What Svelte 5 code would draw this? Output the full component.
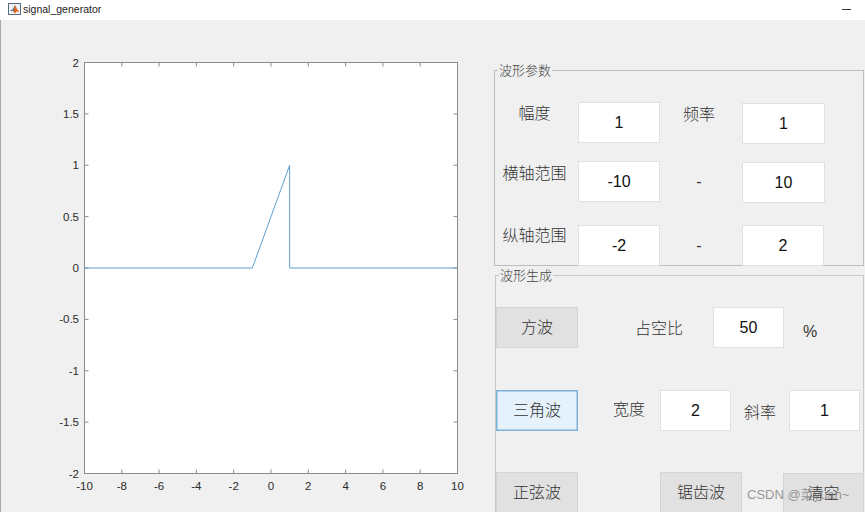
<script>
  const xs = [-10, -8, -6, -4, -2, 0, 2, 4, 6, 8, 10];
  const ys = [-2, -1.5, -1, -0.5, 0, 0.5, 1, 1.5, 2];
  const px = (v) => 0.5 + ((v + 10) / 20) * 373;
  const py = (v) => 0.5 + ((2 - v) / 4) * 411;
  const line = [[-10, 0], [-1, 0], [1, 1], [1, 0], [10, 0]].map(([a, b]) => `${px(a)},${py(b)}`).join(' ');
</script>

<div class="window">
  <header class="titlebar">
    <svg class="logo" viewBox="0 0 13 12" width="13" height="12" aria-hidden="true">
      <rect x="0.5" y="0.5" width="12" height="11" fill="#eef2f7" stroke="#5d6d80" />
      <path d="M2 8 L5 6.2 L7 2 L9 6 L11.5 9.5 L8.8 8.2 L7 10.5 L5 8 Z" fill="#e0631f" />
      <path d="M2 8 L5 6.2 L7 2 L6 6.5 L4.8 8 Z" fill="#2f78b5" />
    </svg>
    <span class="title">signal_generator</span>
    <span class="minimize"></span>
  </header>

  <main class="body">
    <section class="plot">
      <svg width="444" height="450" viewBox="-44 -8 444 450" aria-label="plot">
        <rect x="0.5" y="0.5" width="373" height="411" fill="#fff" />
        {#each xs as v}
          <path class="tick" d="M{px(v)} 0.5 v4 M{px(v)} 411.5 v-4" />
          <text class="xlabel" x={px(v)} y="428">{v}</text>
        {/each}
        {#each ys as v}
          <path class="tick" d="M0.5 {py(v)} h4 M373.5 {py(v)} h-4" />
          <text class="ylabel" x="-5" y={py(v) + 4}>{v}</text>
        {/each}
        <rect class="frame" x="0.5" y="0.5" width="373" height="411" />
        <polyline class="curve" points={line} />
      </svg>
    </section>

    <aside class="controls">
      <fieldset class="panel params">
        <legend>波形参数</legend>
        <div class="param-grid">
          <span class="label raised">幅度</span>
          <span class="field">1</span>
          <span class="label">频率</span>
          <span class="field low">1</span>

          <span class="label">横轴范围</span>
          <span class="field">-10</span>
          <span class="dash">-</span>
          <span class="field low">10</span>

          <span class="label last">纵轴范围</span>
          <span class="field bottom">-2</span>
          <span class="dash bottom">-</span>
          <span class="field bottom">2</span>
        </div>
      </fieldset>

      <fieldset class="panel wave">
        <legend>波形生成</legend>
        <div class="row first">
          <button class="btn">方波</button>
          <span class="label duty">占空比</span>
          <span class="field mid">50</span>
          <span class="percent">%</span>
        </div>
        <div class="row second">
          <button class="btn active">三角波</button>
          <span class="label width-label">宽度</span>
          <span class="field mid">2</span>
          <span class="label slope">斜率</span>
          <span class="field mid">1</span>
        </div>
        <div class="row third">
          <button class="btn">正弦波</button>
          <button class="btn saw">锯齿波</button>
          <button class="btn clear">清空</button>
        </div>
      </fieldset>
    </aside>
  </main>

  <span class="watermark">CSDN @菜yuan~</span>
</div>

<style>
  :global(body) {
    margin: 0;
    background: #f0f0f0;
  }
  .window {
    position: relative;
    width: 865px;
    height: 512px;
    overflow: hidden;
    background: #f0f0f0;
    font-family: "Liberation Sans", "Noto Sans CJK SC", sans-serif;
  }
  .titlebar {
    display: flex;
    align-items: center;
    height: 20px;
    padding: 0 14px 2px 8px;
    box-sizing: border-box;
    background: #fff;
  }
  .logo {
    flex: none;
  }
  .title {
    margin-left: 2px;
    font-size: 10.5px;
    color: #222;
  }
  .minimize {
    margin-left: auto;
    width: 9px;
    height: 1px;
    background: #333;
  }
  .body {
    display: flex;
    height: 492px;
    border-left: 1px solid #a8a8a8;
  }
  .plot {
    flex: none;
    width: 493px;
    padding: 34px 0 0 39px;
    box-sizing: border-box;
  }
  .plot svg {
    display: block;
  }
  .tick,
  .frame {
    stroke: #8c8c8c;
    fill: none;
  }
  .curve {
    fill: none;
    stroke: #5f9fcc;
    stroke-width: 1;
  }
  .xlabel,
  .ylabel {
    font-family: "Liberation Sans", sans-serif;
    font-size: 11.5px;
    fill: #2b2b2b;
  }
  .xlabel {
    text-anchor: middle;
  }
  .ylabel {
    text-anchor: end;
  }
  .controls {
    flex: none;
    width: 371px;
    padding-top: 43px;
  }
  .panel {
    margin: 0;
    padding: 0;
    min-width: 0;
    border: 1px solid #c8c8c8;
    box-sizing: border-box;
  }
  legend {
    margin-left: 3px;
    padding: 0 1px;
    font-size: 13px;
    line-height: 14px;
    color: #444;
    font-family: "Noto Sans CJK SC", sans-serif;
    font-weight: 300;
  }
  .params {
    width: 370px;
    height: 203px;
    border-color: #bdbdbd;
  }
  .wave {
    width: 369px;
    margin: 2px 0 0 1px;
    height: 260px;
    border-bottom: none;
  }
  .param-grid {
    display: grid;
    grid-template-columns: 83px 82px 82px 83px;
    grid-template-rows: 41px 41px 46px;
    row-gap: 18px;
    margin-top: 25px;
  }
  .param-grid .field {
    width: 82px;
    height: 41px;
  }
  .param-grid .low {
    width: 83px;
    margin-top: 1px;
  }
  .param-grid .label,
  .dash {
    padding-right: 4px;
  }
  .param-grid .bottom {
    align-self: end;
  }
  .param-grid .raised {
    margin-top: -1px;
  }
  .param-grid .last {
    margin-top: 3px;
  }
  .label {
    font-family: "Noto Sans CJK SC", sans-serif;
    font-weight: 300;
    font-size: 16px;
    line-height: 22px;
    color: #333;
    text-align: center;
    white-space: nowrap;
  }
  .dash {
    text-align: center;
    font-size: 16px;
    line-height: 41px;
    color: #333;
  }
  .field {
    display: flex;
    align-items: center;
    justify-content: center;
    box-sizing: border-box;
    background: #fff;
    border: 1px solid #e0e0e0;
    font-size: 16px;
    color: #111;
  }
  .mid {
    width: 71px;
    height: 41px;
    flex: none;
  }
  .row {
    display: flex;
    align-items: flex-start;
    height: 41px;
  }
  .first {
    margin-top: 25px;
  }
  .second {
    margin-top: 42px;
  }
  .third {
    margin-top: 41px;
  }
  .btn {
    flex: none;
    width: 82px;
    height: 41px;
    padding: 0 0 4px;
    box-sizing: border-box;
    background: #e1e1e1;
    border: 1px solid #d4d4d4;
    font-family: "Noto Sans CJK SC", sans-serif;
    font-weight: 300;
    font-size: 16px;
    color: #333;
  }
  .active {
    background: #e5f1fb;
    border: 1px solid #7fb2d9;
    box-shadow: inset 0 0 0 0.5px #7fb2d9;
  }
  .duty {
    margin: 9px 0 0 57px;
    width: 48px;
  }
  .first .mid {
    margin-left: 30px;
  }
  .percent {
    margin: 16px 0 0 19px;
    font-size: 16px;
    line-height: 18px;
    color: #333;
  }
  .width-label {
    margin: 7px 15px 0 35px;
  }
  .slope {
    margin: 10px 13px 0 13px;
  }
  .saw {
    margin-left: 82px;
  }
  .clear {
    width: 81px;
    margin: 1px 0 0 41px;
  }
  .watermark {
    position: absolute;
    left: 747px;
    top: 487px;
    font-size: 13px;
    line-height: 16px;
    color: rgba(120, 120, 120, 0.75);
    font-family: "Liberation Sans", "Noto Sans CJK SC", sans-serif;
    white-space: nowrap;
  }
</style>
